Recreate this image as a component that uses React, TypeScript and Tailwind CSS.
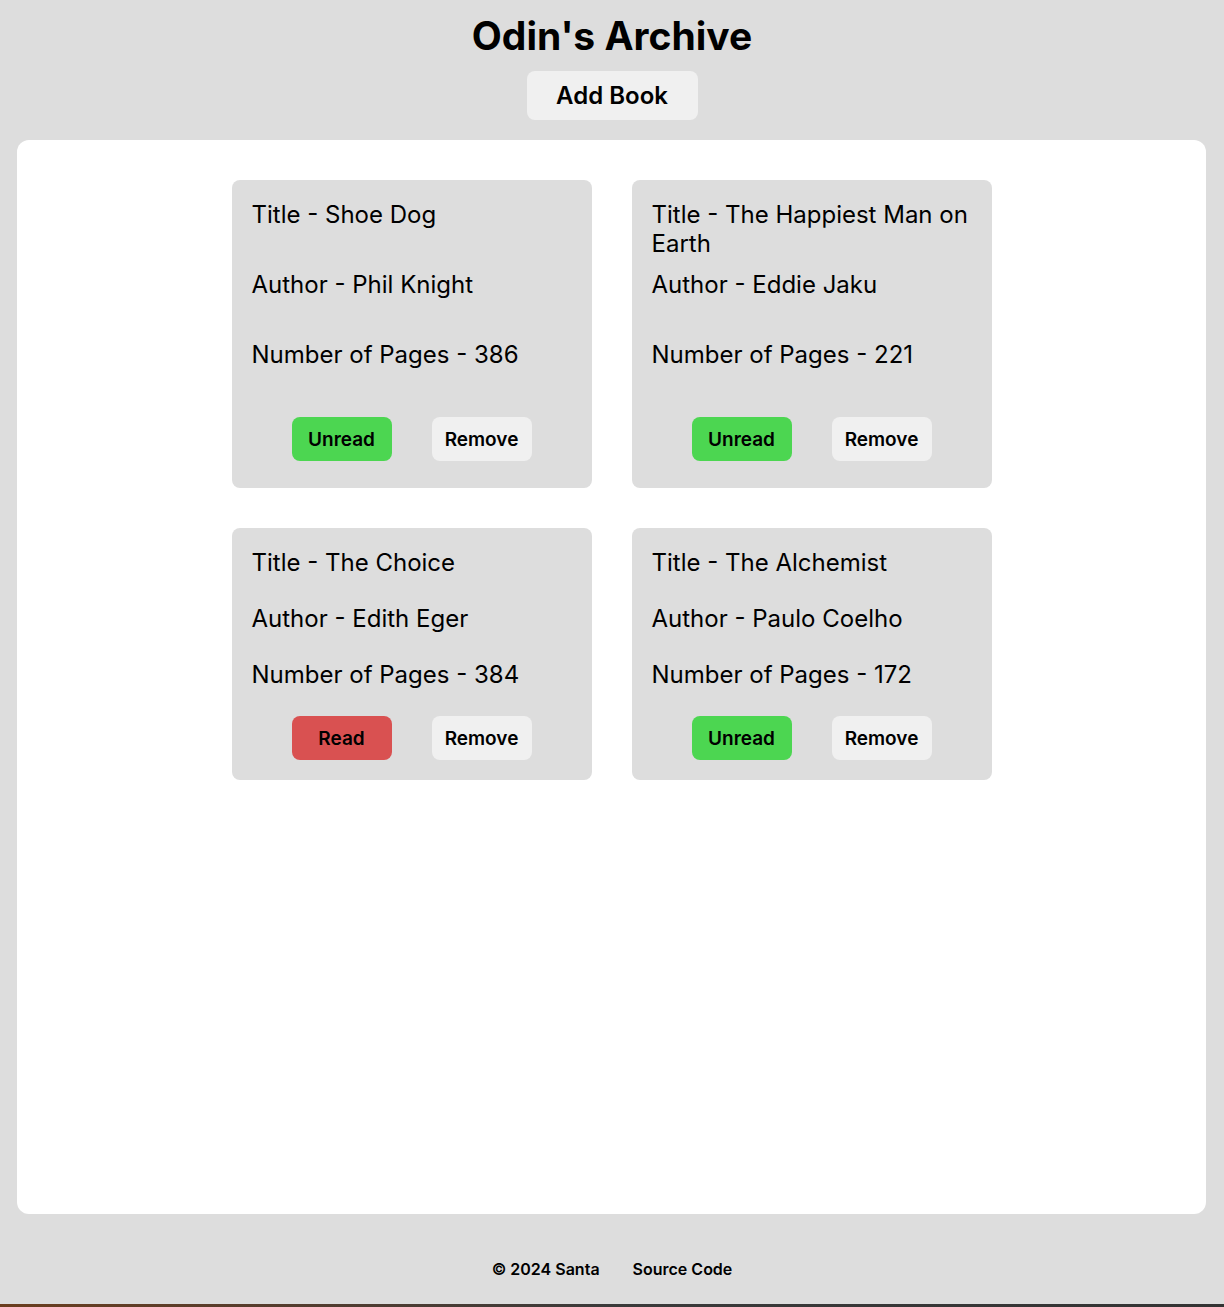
import React from "react";

type Book = { title: string; author: string; pages: number; read: boolean };

const books: Book[] = [
  { title: "Shoe Dog", author: "Phil Knight", pages: 386, read: false },
  { title: "The Happiest Man on Earth", author: "Eddie Jaku", pages: 221, read: false },
  { title: "The Choice", author: "Edith Eger", pages: 384, read: true },
  { title: "The Alchemist", author: "Paulo Coelho", pages: 172, read: false },
];

function Card({ b }: { b: Book }) {
  return (
    <div className="grid auto-rows-fr gap-[12px] rounded-[8px] bg-[#dddddd] p-[20px] text-[24px] leading-[29px] text-black">
      <p>Title - {b.title}</p>
      <p>Author - {b.author}</p>
      <p>Number of Pages - {b.pages}</p>
      <div className="flex items-center justify-evenly">
        <button
          className={
            "h-[44px] w-[100px] rounded-[8px] text-[19px] font-semibold text-black " +
            (b.read ? "bg-[#d95151]" : "bg-[#4cd651]")
          }
        >
          {b.read ? "Read" : "Unread"}
        </button>
        <button className="h-[44px] w-[100px] rounded-[8px] bg-[#f0f0f0] text-[19px] font-semibold text-black">
          Remove
        </button>
      </div>
    </div>
  );
}

export default function App() {
  return (
    <div
      className="flex h-[1307px] flex-col bg-[#dddddd]"
      style={{ fontFamily: "Inter, 'Noto Sans', sans-serif" }}
    >
      <header className="flex flex-col items-center pt-[12px]">
        <h1 className="text-[39px] font-bold leading-[48px] text-black">Odin's Archive</h1>
        <button className="mt-[11px] h-[49px] w-[171px] rounded-[8px] bg-[#f0f0f0] text-[24px] font-semibold text-black">
          Add Book
        </button>
      </header>
      <main className="ml-[17px] mr-[18px] mt-[20px] h-[1074px] rounded-[12px] bg-white pt-[40px]">
        <div className="mx-auto grid w-[760px] grid-cols-[360px_360px] gap-[40px]">
          {books.map((b) => (
            <Card key={b.title} b={b} />
          ))}
        </div>
      </main>
      <footer className="flex flex-1 items-start justify-center gap-[33px] pt-[43px] text-[16px] font-semibold text-black">
        <span>© 2024 Santa</span>
        <span>Source Code</span>
      </footer>
      <div className="h-[3px] bg-linear-to-r from-[#6a3d1e] via-[#3a3a3a] to-[#333333]" />
    </div>
  );
}
